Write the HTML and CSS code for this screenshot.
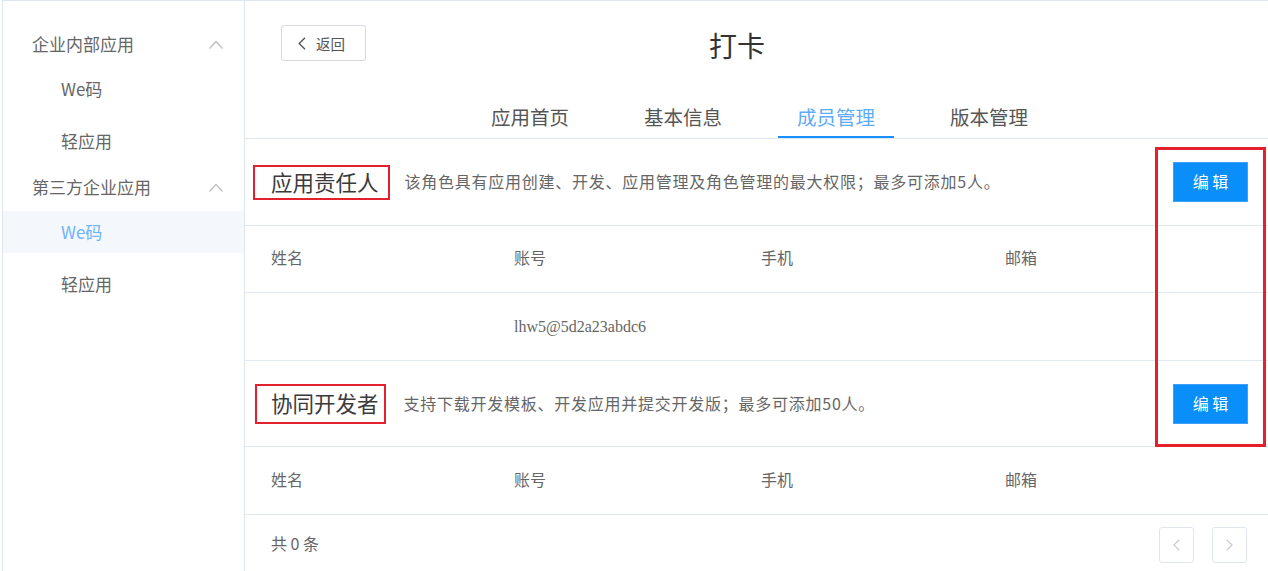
FILE: index.html
```html
<!DOCTYPE html>
<html lang="zh-CN">
<head>
<meta charset="utf-8">
<title>打卡 - 成员管理</title>
<link rel="stylesheet" href="styles.css">
</head>
<body>
<div class="app">
  <aside class="sidebar">
    <div class="group group-first">
      <div class="group-title">
        <span>企业内部应用</span>
        <svg class="chev" width="14" height="9" viewBox="0 0 14 9"><polyline points="0.5,8.5 7,1.5 13.5,8.5" fill="none" stroke="#bdbdbd" stroke-width="1.2"/></svg>
      </div>
      <div class="sub">
        <div class="item">We码</div>
        <div class="item">轻应用</div>
      </div>
    </div>
    <div class="group">
      <div class="group-title">
        <span>第三方企业应用</span>
        <svg class="chev" width="14" height="9" viewBox="0 0 14 9"><polyline points="0.5,8.5 7,1.5 13.5,8.5" fill="none" stroke="#bdbdbd" stroke-width="1.2"/></svg>
      </div>
      <div class="sub">
        <div class="item active">We码</div>
        <div class="item">轻应用</div>
      </div>
    </div>
  </aside>

  <main class="main">
    <div class="header">
      <button class="back">
        <svg width="8" height="13" viewBox="0 0 8 13"><polyline points="7,0.8 1.2,6.5 7,12.2" fill="none" stroke="#555" stroke-width="1.4"/></svg>
        <span>返回</span>
      </button>
      <h1 class="title">打卡</h1>
    </div>

    <nav class="tabs">
      <div class="tab">应用首页</div>
      <div class="tab">基本信息</div>
      <div class="tab active">成员管理</div>
      <div class="tab">版本管理</div>
    </nav>

    <section class="role">
      <div class="role-head">
        <span class="tag tag-a">应用责任人</span>
        <span class="desc">该角色具有应用创建、开发、应用管理及角色管理的最大权限；最多可添加5人。</span>
        <button class="edit">编 辑</button>
      </div>
      <div class="row row-short">
        <div class="cell">姓名</div>
        <div class="cell">账号</div>
        <div class="cell">手机</div>
        <div class="cell">邮箱</div>
      </div>
      <div class="row">
        <div class="cell"></div>
        <div class="cell latin">lhw5@5d2a23abdc6</div>
        <div class="cell"></div>
        <div class="cell"></div>
      </div>
    </section>

    <section class="role">
      <div class="role-head role-head-b">
        <span class="tag tag-b">协同开发者</span>
        <span class="desc desc-b">支持下载开发模板、开发应用并提交开发版；最多可添加50人。</span>
        <button class="edit">编 辑</button>
      </div>
      <div class="row">
        <div class="cell">姓名</div>
        <div class="cell">账号</div>
        <div class="cell">手机</div>
        <div class="cell">邮箱</div>
      </div>
    </section>

    <div class="footer">
      <span class="total">共 0 条</span>
      <div class="pager">
        <button class="page-btn">
          <svg width="7" height="12" viewBox="0 0 7 12"><polyline points="6.3,0.7 0.9,6 6.3,11.3" fill="none" stroke="#c8ccd3" stroke-width="1.2"/></svg>
        </button>
        <button class="page-btn">
          <svg width="7" height="12" viewBox="0 0 7 12"><polyline points="0.7,0.7 6.1,6 0.7,11.3" fill="none" stroke="#c8ccd3" stroke-width="1.2"/></svg>
        </button>
      </div>
    </div>

    <div class="annot"></div>
  </main>
</div>
</body>
</html>
```

FILE: styles.css
```css
* { box-sizing: border-box; }

html, body {
  margin: 0;
  padding: 0;
  background: #ffffff;
}

body {
  font-family: "Noto Sans CJK SC", "Noto Sans", sans-serif;
  color: #666;
  overflow: hidden;
}

.app {
  display: flex;
  margin-left: 2px;
  height: 571px;
  border-top: 1px solid #dde6f1;
  border-left: 1px solid #dde6f1;
}

/* Sidebar */
.sidebar {
  width: 242px;
  flex: none;
  border-right: 1px solid #dde6f1;
  padding-top: 21px;
}

.group-first { margin-bottom: 3px; }

.group-title {
  height: 46px;
  display: flex;
  align-items: center;
  justify-content: space-between;
  padding: 0 21px 3px 29px;
  font-size: 17px;
  color: #666;
}

.chev { display: block; margin-top: 2px; }

.sub {
  display: flex;
  flex-direction: column;
  gap: 10px;
}

.item {
  height: 42px;
  line-height: 42px;
  padding-left: 58px;
  font-size: 17px;
  color: #666;
}

.item.active {
  background: #f4f8fc;
  color: #6fb3f8;
}

/* Main */
.main {
  flex: 1;
  position: relative;
  overflow: hidden;
}

.header {
  height: 96px;
  display: flex;
  align-items: flex-start;
  padding: 24px 0 0 36px;
}

.back {
  width: 85px;
  height: 36px;
  display: flex;
  align-items: center;
  justify-content: center;
  gap: 10px;
  padding: 0 4px 0 0;
  border: 1px solid #d7dade;
  border-radius: 3px;
  background: #fff;
  font-family: "Noto Sans CJK SC", sans-serif;
  font-size: 14.5px;
  color: #555;
  box-shadow: 0 0 1px rgba(0,0,0,0.06);
}

.back svg { display: block; }

.title {
  margin: 2px 0 0 343px;
  font-size: 28px;
  line-height: 36px;
  font-weight: 400;
  color: #333;
}

.tabs {
  display: flex;
  gap: 37px;
  padding-left: 227px;
  height: 42px;
  border-bottom: 1px solid #dde6f1;
}

.tab {
  width: 116px;
  height: 41px;
  line-height: 39px;
  text-align: center;
  font-size: 19.5px;
  color: #555;
  border-bottom: 2px solid transparent;
}

.tab.active {
  color: #5eabf7;
  border-bottom-color: #1890ff;
}

/* Roles */
.role-head {
  height: 87px;
  display: flex;
  align-items: center;
  padding: 0 20px 0 8px;
  border-bottom: 1px solid #e0e8f2;
}

.role-head-b { height: 86px; }

.tag {
  display: inline-block;
  border: 2px solid #e3202b;
  font-size: 21.5px;
  color: #3a3a3a;
}

.tag-a {
  height: 35px;
  line-height: 30px;
  padding: 0 9px 0 16px;
}

.tag-b {
  height: 40px;
  line-height: 33px;
  padding: 0 5px 0 14px;
  margin-left: 2px;
}

.desc {
  margin-left: 15px;
  padding-bottom: 2px;
  font-size: 16px;
  letter-spacing: 0.75px;
  color: #666;
}

.desc-b { margin-left: 18px; }

.edit {
  margin-left: auto;
  width: 75px;
  height: 40px;
  border: 1px solid #3ea2fb;
  background: #0a8ffa;
  color: #fff;
  font-family: "Noto Sans CJK SC", sans-serif;
  font-size: 16px;
  padding: 0 0 2px;
}

.row {
  height: 68px;
  display: grid;
  grid-template-columns: 243px 247px 244px 1fr;
  align-items: center;
  padding-bottom: 4px;
  border-bottom: 1px solid #e0e8f2;
}

.row-short { height: 67px; }

.cell {
  padding-left: 26px;
  font-size: 16px;
  color: #666;
}

.cell.latin {
  font-family: "Liberation Serif", serif;
  color: #666;
  padding-top: 4px;
}

.footer {
  height: 60px;
  display: flex;
  align-items: center;
  justify-content: space-between;
  padding: 0 21px 0 26px;
}

.total {
  font-size: 16px;
  color: #666;
  padding-bottom: 4px;
}

.pager {
  display: flex;
  gap: 18px;
}

.page-btn {
  width: 35px;
  height: 36px;
  display: flex;
  align-items: center;
  justify-content: center;
  padding: 0;
  border: 1px solid #dfe6ee;
  border-radius: 3px;
  background: #fff;
}

.page-btn svg { display: block; }

/* Annotation overlay */
.annot {
  position: absolute;
  left: 910px;
  top: 146px;
  width: 111px;
  height: 300px;
  border: 3px solid #e3202b;
  pointer-events: none;
}
```
